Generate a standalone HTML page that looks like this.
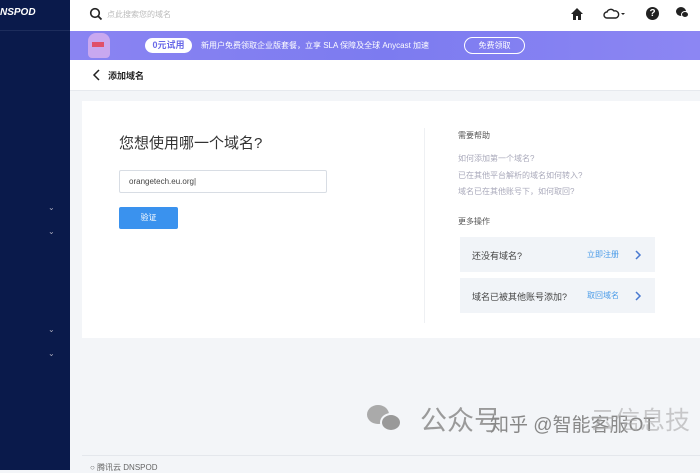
<html><head><style>
body{margin:0;width:700px;height:470px;overflow:hidden;background:#f3f5f8;font-family:"Liberation Sans","Noto Sans CJK SC",sans-serif;position:relative}
div{position:absolute;box-sizing:border-box}
.t{white-space:nowrap}
</style></head><body>
<div style="left:0;top:0;width:70px;height:470px;background:#0a1a4b"></div>
<div class="t" style="left:0;top:7px;color:#fff;font-weight:bold;font-style:italic;font-size:10px">NSPOD</div>
<div style="left:0;top:30px;width:70px;height:1px;background:#1d2d5c"></div>
<div class="t" style="left:48px;top:203px;color:#aab;font-size:8px">⌄</div>
<div class="t" style="left:48px;top:227px;color:#aab;font-size:8px">⌄</div>
<div class="t" style="left:48px;top:325px;color:#aab;font-size:8px">⌄</div>
<div class="t" style="left:48px;top:349px;color:#aab;font-size:8px">⌄</div>
<div style="left:70px;top:0;width:630px;height:31px;background:#fff"></div>
<svg style="position:absolute;left:89px;top:7px" width="14" height="14"><circle cx="6" cy="6" r="4.3" fill="none" stroke="#222" stroke-width="1.6"/><path d="M9 9l3.5 3.5" stroke="#222" stroke-width="1.8"/></svg>
<div class="t" style="left:107px;top:9px;font-size:8px;color:#bbb">点此搜索您的域名</div>
<svg style="position:absolute;left:570px;top:7px" width="14" height="14"><path d="M7 1L1 7h2v6h3V9h2v4h3V7h2z" fill="#222"/></svg>
<svg style="position:absolute;left:603px;top:7px" width="26" height="14"><path d="M4 11a3 3 0 010-6 4 4 0 017-1 3 3 0 012 7z" fill="none" stroke="#222" stroke-width="1.4"/><path d="M18 6l2 2 2-2z" fill="#222"/></svg>
<div style="left:646px;top:7px;width:13px;height:13px;border-radius:50%;background:#222;color:#fff;font-size:10px;font-weight:bold;text-align:center;line-height:13px">?</div>
<div style="left:676px;top:7px;width:10px;height:9px;border-radius:50%;background:#222"></div>
<div style="left:681px;top:11px;width:8px;height:7px;border-radius:50%;background:#222;border:1px solid #fff"></div>
<div style="left:70px;top:31px;width:630px;height:29px;background:linear-gradient(90deg,#8a84f2,#7c7bf0 50%,#8c86f3)"></div>
<div style="left:88px;top:33px;width:22px;height:25px;border-radius:8px 8px 4px 4px;background:#c9a8f0"></div>
<div style="left:92px;top:42px;width:12px;height:5px;background:#e0506a"></div>
<div class="t" style="left:145px;top:38px;width:47px;height:15px;border-radius:8px;background:#fff;color:#6a6ae8;font-size:9px;font-weight:bold;text-align:center;line-height:15px">0元试用</div>
<div class="t" style="left:201px;top:40px;color:#fff;font-size:8px">新用户免费领取企业版套餐，立享 SLA 保障及全球 Anycast 加速</div>
<div class="t" style="left:464px;top:37px;width:61px;height:17px;border:1px solid #fff;border-radius:9px;color:#fff;font-size:8px;text-align:center;line-height:15px">免费领取</div>
<div style="left:70px;top:60px;width:630px;height:31px;background:#fff;border-bottom:1px solid #e6e9ee"></div>
<svg style="position:absolute;left:92px;top:69px" width="10" height="12"><path d="M7 1L2 6l5 5" fill="none" stroke="#222" stroke-width="1.5"/></svg>
<div class="t" style="left:108px;top:69px;font-size:9px;color:#222;font-weight:bold">添加域名</div>
<div style="left:82px;top:101px;width:618px;height:237px;background:#fff"></div>
<div class="t" style="left:119px;top:132px;font-size:15px;color:#333">您想使用哪一个域名?</div>
<div class="t" style="left:119px;top:170px;width:208px;height:23px;border:1px solid #d8dde4;border-radius:2px;font-size:8px;color:#444;padding:6px 9px">orangetech.eu.org|</div>
<div class="t" style="left:119px;top:207px;width:59px;height:22px;background:#3a92ee;border-radius:2px;color:#fff;font-size:8px;text-align:center;line-height:22px">验证</div>
<div style="left:424px;top:128px;width:1px;height:195px;background:#eef0f3"></div>
<div class="t" style="left:458px;top:130px;font-size:8px;color:#555">需要帮助</div>
<div class="t" style="left:458px;top:153px;font-size:8px;color:#aab">如何添加第一个域名?</div>
<div class="t" style="left:458px;top:170px;font-size:8px;color:#aab">已在其他平台解析的域名如何转入?</div>
<div class="t" style="left:458px;top:186px;font-size:8px;color:#aab">域名已在其他账号下，如何取回?</div>
<div class="t" style="left:458px;top:216px;font-size:8px;color:#555">更多操作</div>
<div style="left:460px;top:237px;width:195px;height:35px;background:#f1f4f8"></div>
<div class="t" style="left:472px;top:249px;font-size:9px;color:#444">还没有域名?</div>
<div class="t" style="left:587px;top:249px;font-size:8px;color:#4a9be8">立即注册</div>
<svg style="position:absolute;left:634px;top:250px" width="8" height="10"><path d="M2 1l4 4-4 4" fill="none" stroke="#4a7ad0" stroke-width="1.5"/></svg>
<div style="left:460px;top:278px;width:195px;height:35px;background:#f1f4f8"></div>
<div class="t" style="left:472px;top:290px;font-size:9px;color:#444">域名已被其他账号添加?</div>
<div class="t" style="left:587px;top:290px;font-size:8px;color:#4a9be8">取回域名</div>
<svg style="position:absolute;left:634px;top:291px" width="8" height="10"><path d="M2 1l4 4-4 4" fill="none" stroke="#4a7ad0" stroke-width="1.5"/></svg>
<div style="left:82px;top:455px;width:618px;height:1px;background:#e4e7ec"></div>
<div class="t" style="left:90px;top:462px;font-size:8px;color:#666">○ 腾讯云  DNSPOD</div>
<div style="left:367px;top:405px;width:22px;height:19px;border-radius:50%;background:#aaa"></div>
<div style="left:380px;top:413px;width:22px;height:19px;border-radius:50%;background:#999;border:2px solid #f3f5f8"></div>
<div class="t" style="left:420px;top:399px;font-size:27px;color:#9a9a9a">公众号</div>
<div class="t" style="left:490px;top:410px;font-size:19px;color:#888">知乎 @智能客服OT</div>
<div class="t" style="left:590px;top:401px;font-size:25px;color:#aaa;opacity:.6">云信息技</div>
</body></html>
